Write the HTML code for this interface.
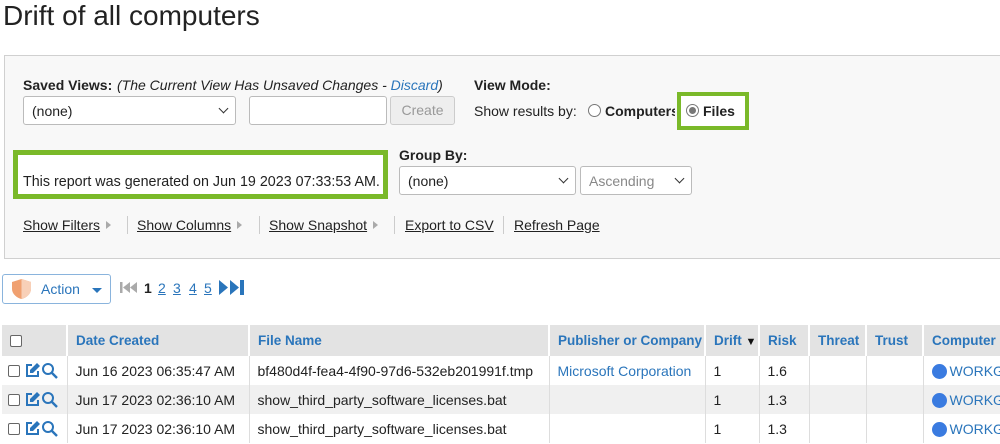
<!DOCTYPE html>
<html><head><style>
*{box-sizing:border-box}
body{margin:0;width:1000px;height:444px;overflow:hidden;background:#fff;font-family:"Liberation Sans",Arial,sans-serif;font-size:14px;color:#222;position:relative}
.a{position:absolute;white-space:nowrap}
.panel{position:absolute;left:4px;top:55px;width:1000px;height:204px;background:#f8f8f8;border:1px solid #d0d0d0}
.sel{position:absolute;background:#fff;border:1px solid #bbb;border-radius:3px;height:29px;padding:6px 8px;font-size:14px}
.chev{position:absolute;right:8px;top:8px;width:7px;height:7px;border-right:1.6px solid #333;border-bottom:1.6px solid #333;transform:rotate(45deg)}
.lnk{text-decoration:underline;color:#222}
.tri{display:inline-block;width:0;height:0;border-left:5px solid #aaa;border-top:4px solid transparent;border-bottom:4px solid transparent;margin-left:6px;vertical-align:1px}
.sep{position:absolute;top:216px;width:1px;height:18px;background:#ccc}
table{position:absolute;left:2px;top:325px;border-collapse:collapse;font-size:14px;table-layout:fixed;width:1100px}
th,td{white-space:nowrap;overflow:hidden}
th{background:#e3e3e3;color:#2a75bb;text-align:left;font-weight:bold;font-size:13.5px;height:31px;padding:0 8px;border-right:2px solid #fff}
td{height:29px;padding:0 8px;border-right:1px solid #ddd}
tr.g td{background:#f0f0f0}
.cb{display:inline-block;width:12px;height:12px;border:1.3px solid #666;border-radius:2px;vertical-align:middle;background:#fff}
.dot{display:inline-block;width:15px;height:15px;border-radius:50%;background:#3a7be0;vertical-align:-3px;margin-right:3px}
.blue{color:#2a75bb}
.ic{vertical-align:middle}
</style></head><body>
<div class="a" style="left:3px;top:0;font-size:28px;color:#222">Drift of all computers</div>
<div class="panel"></div>
<div class="a" style="left:23px;top:77px;font-weight:bold">Saved Views:</div>
<div class="a" style="left:117px;top:77px;font-style:italic">(The Current View Has Unsaved Changes - <span class="blue">Discard</span>)</div>
<div class="sel" style="left:23px;top:96px;width:213px">(none)<span class="chev"></span></div>
<div class="sel" style="left:249px;top:96px;width:138px"></div>
<div class="a" style="left:390px;top:96px;width:65px;height:29px;background:#eee;border:1px solid #ccc;border-radius:3px;color:#999;text-align:center;line-height:27px">Create</div>
<div class="a" style="left:474px;top:77px;font-weight:bold">View Mode:</div>
<div class="a" style="left:474px;top:103px">Show results by:</div>
<div class="a" style="left:588px;top:104px;width:13px;height:13px;border:1px solid #777;border-radius:50%;background:#fff"></div>
<div class="a" style="left:605px;top:103px;font-weight:bold;width:70px;overflow:hidden">Computers</div>
<div class="a" style="left:677px;top:92px;width:72px;height:38px;border:4px solid #7ab929;background:#fff"></div>
<div class="a" style="left:686px;top:104px;width:13px;height:13px;border:1px solid #777;border-radius:50%;background:#fff"><div style="margin:2px;width:7px;height:7px;border-radius:50%;background:#777"></div></div>
<div class="a" style="left:703px;top:103px;font-weight:bold">Files</div>
<div class="a" style="left:13px;top:150px;width:375px;height:49px;border:5px solid #7ab929;background:#fff"></div>
<div class="a" style="left:23px;top:174px;font-size:14.3px">This report was generated on Jun 19 2023 07:33:53 AM.</div>
<div class="a" style="left:399px;top:147px;font-weight:bold">Group By:</div>
<div class="sel" style="left:399px;top:166px;width:177px">(none)<span class="chev"></span></div>
<div class="sel" style="left:580px;top:166px;width:112px;color:#888">Ascending<span class="chev"></span></div>
<div class="a" style="left:23px;top:217px"><span class="lnk">Show Filters</span><span class="tri"></span></div>
<div class="sep" style="left:127px"></div>
<div class="a" style="left:137px;top:217px"><span class="lnk">Show Columns</span><span class="tri"></span></div>
<div class="sep" style="left:259px"></div>
<div class="a" style="left:269px;top:217px"><span class="lnk">Show Snapshot</span><span class="tri"></span></div>
<div class="sep" style="left:394px"></div>
<div class="a" style="left:405px;top:217px"><span class="lnk">Export to CSV</span></div>
<div class="sep" style="left:503px"></div>
<div class="a" style="left:514px;top:217px"><span class="lnk">Refresh Page</span></div>
<div class="a" style="left:2px;top:274px;width:109px;height:30px;border:1px solid #8ab4dd;border-radius:3px;background:#fff"></div>
<svg class="a" style="left:11px;top:278px" width="21" height="22" viewBox="0 0 21 22"><path d="M10.5 1 L20 4 V11 C20 16 15 20 10.5 21 C6 20 1 16 1 11 V4 Z" fill="#f0a070"/><path d="M10.5 1 L20 4 V11 C20 16 15 20 10.5 21 Z" fill="#f8d0b8"/></svg>
<div class="a blue" style="left:41px;top:281px">Action</div>
<div class="a" style="left:92px;top:288px;border-top:5px solid #2a75bb;border-left:5px solid transparent;border-right:5px solid transparent"></div>
<svg class="a" style="left:120px;top:281px" width="22" height="13"><rect x="0" y="1" width="2.5" height="11" fill="#aaa"/><path d="M10 1 L3 6.5 L10 12Z M17 1 L10 6.5 L17 12Z" fill="#aaa"/></svg>
<div class="a" style="left:144px;top:280px;font-weight:bold">1</div>
<div class="a blue" style="left:158px;top:280px;text-decoration:underline">2</div>
<div class="a blue" style="left:173px;top:280px;text-decoration:underline">3</div>
<div class="a blue" style="left:189px;top:280px;text-decoration:underline">4</div>
<div class="a blue" style="left:204px;top:280px;text-decoration:underline">5</div>
<svg class="a" style="left:219px;top:279px" width="28" height="17"><path d="M0 1 L9 8.5 L0 16Z M11 1 L20 8.5 L11 16Z" fill="#2a75bb"/><rect x="21" y="1" width="4" height="15" fill="#2a75bb"/></svg>
<table>
<colgroup><col style="width:65px"><col style="width:182px"><col style="width:300px"><col style="width:156px"><col style="width:54px"><col style="width:50px"><col style="width:57px"><col style="width:57px"><col style="width:179px"></colgroup>
<tr><th><span class="cb"></span></th><th>Date Created</th><th>File Name</th><th>Publisher or Company</th><th>Drift <span style="color:#111;font-size:11px">▼</span></th><th>Risk</th><th>Threat</th><th>Trust</th><th>Computer</th></tr>
<tr><td style="padding:0 6px"><span class="cb"></span> <svg class="ic" width="17" height="17" viewBox="0 0 17 17"><path d="M8 3 H3 V14 H14 V9" fill="none" stroke="#2a75bb" stroke-width="2"/><path d="M13 1 L16 4 L9 11 L6 11 L6 8Z" fill="#2a75bb"/></svg><svg class="ic" width="18" height="18" viewBox="0 0 18 18"><circle cx="7" cy="7" r="5" fill="none" stroke="#2a75bb" stroke-width="2"/><path d="M11 11 L16 16" stroke="#2a75bb" stroke-width="2.4"/></svg></td><td>Jun 16 2023 06:35:47 AM</td><td>bf480d4f-fea4-4f90-97d6-532eb201991f.tmp</td><td class="blue">Microsoft Corporation</td><td>1</td><td>1.6</td><td></td><td></td><td class="blue"><span class="dot"></span>WORKGROUP</td></tr>
<tr class="g"><td style="padding:0 6px"><span class="cb"></span> <svg class="ic" width="17" height="17" viewBox="0 0 17 17"><path d="M8 3 H3 V14 H14 V9" fill="none" stroke="#2a75bb" stroke-width="2"/><path d="M13 1 L16 4 L9 11 L6 11 L6 8Z" fill="#2a75bb"/></svg><svg class="ic" width="18" height="18" viewBox="0 0 18 18"><circle cx="7" cy="7" r="5" fill="none" stroke="#2a75bb" stroke-width="2"/><path d="M11 11 L16 16" stroke="#2a75bb" stroke-width="2.4"/></svg></td><td>Jun 17 2023 02:36:10 AM</td><td>show_third_party_software_licenses.bat</td><td></td><td>1</td><td>1.3</td><td></td><td></td><td class="blue"><span class="dot"></span>WORKGROUP</td></tr>
<tr><td style="padding:0 6px"><span class="cb"></span> <svg class="ic" width="17" height="17" viewBox="0 0 17 17"><path d="M8 3 H3 V14 H14 V9" fill="none" stroke="#2a75bb" stroke-width="2"/><path d="M13 1 L16 4 L9 11 L6 11 L6 8Z" fill="#2a75bb"/></svg><svg class="ic" width="18" height="18" viewBox="0 0 18 18"><circle cx="7" cy="7" r="5" fill="none" stroke="#2a75bb" stroke-width="2"/><path d="M11 11 L16 16" stroke="#2a75bb" stroke-width="2.4"/></svg></td><td>Jun 17 2023 02:36:10 AM</td><td>show_third_party_software_licenses.bat</td><td></td><td>1</td><td>1.3</td><td></td><td></td><td class="blue"><span class="dot"></span>WORKGROUP</td></tr>
</table>
</body></html>
